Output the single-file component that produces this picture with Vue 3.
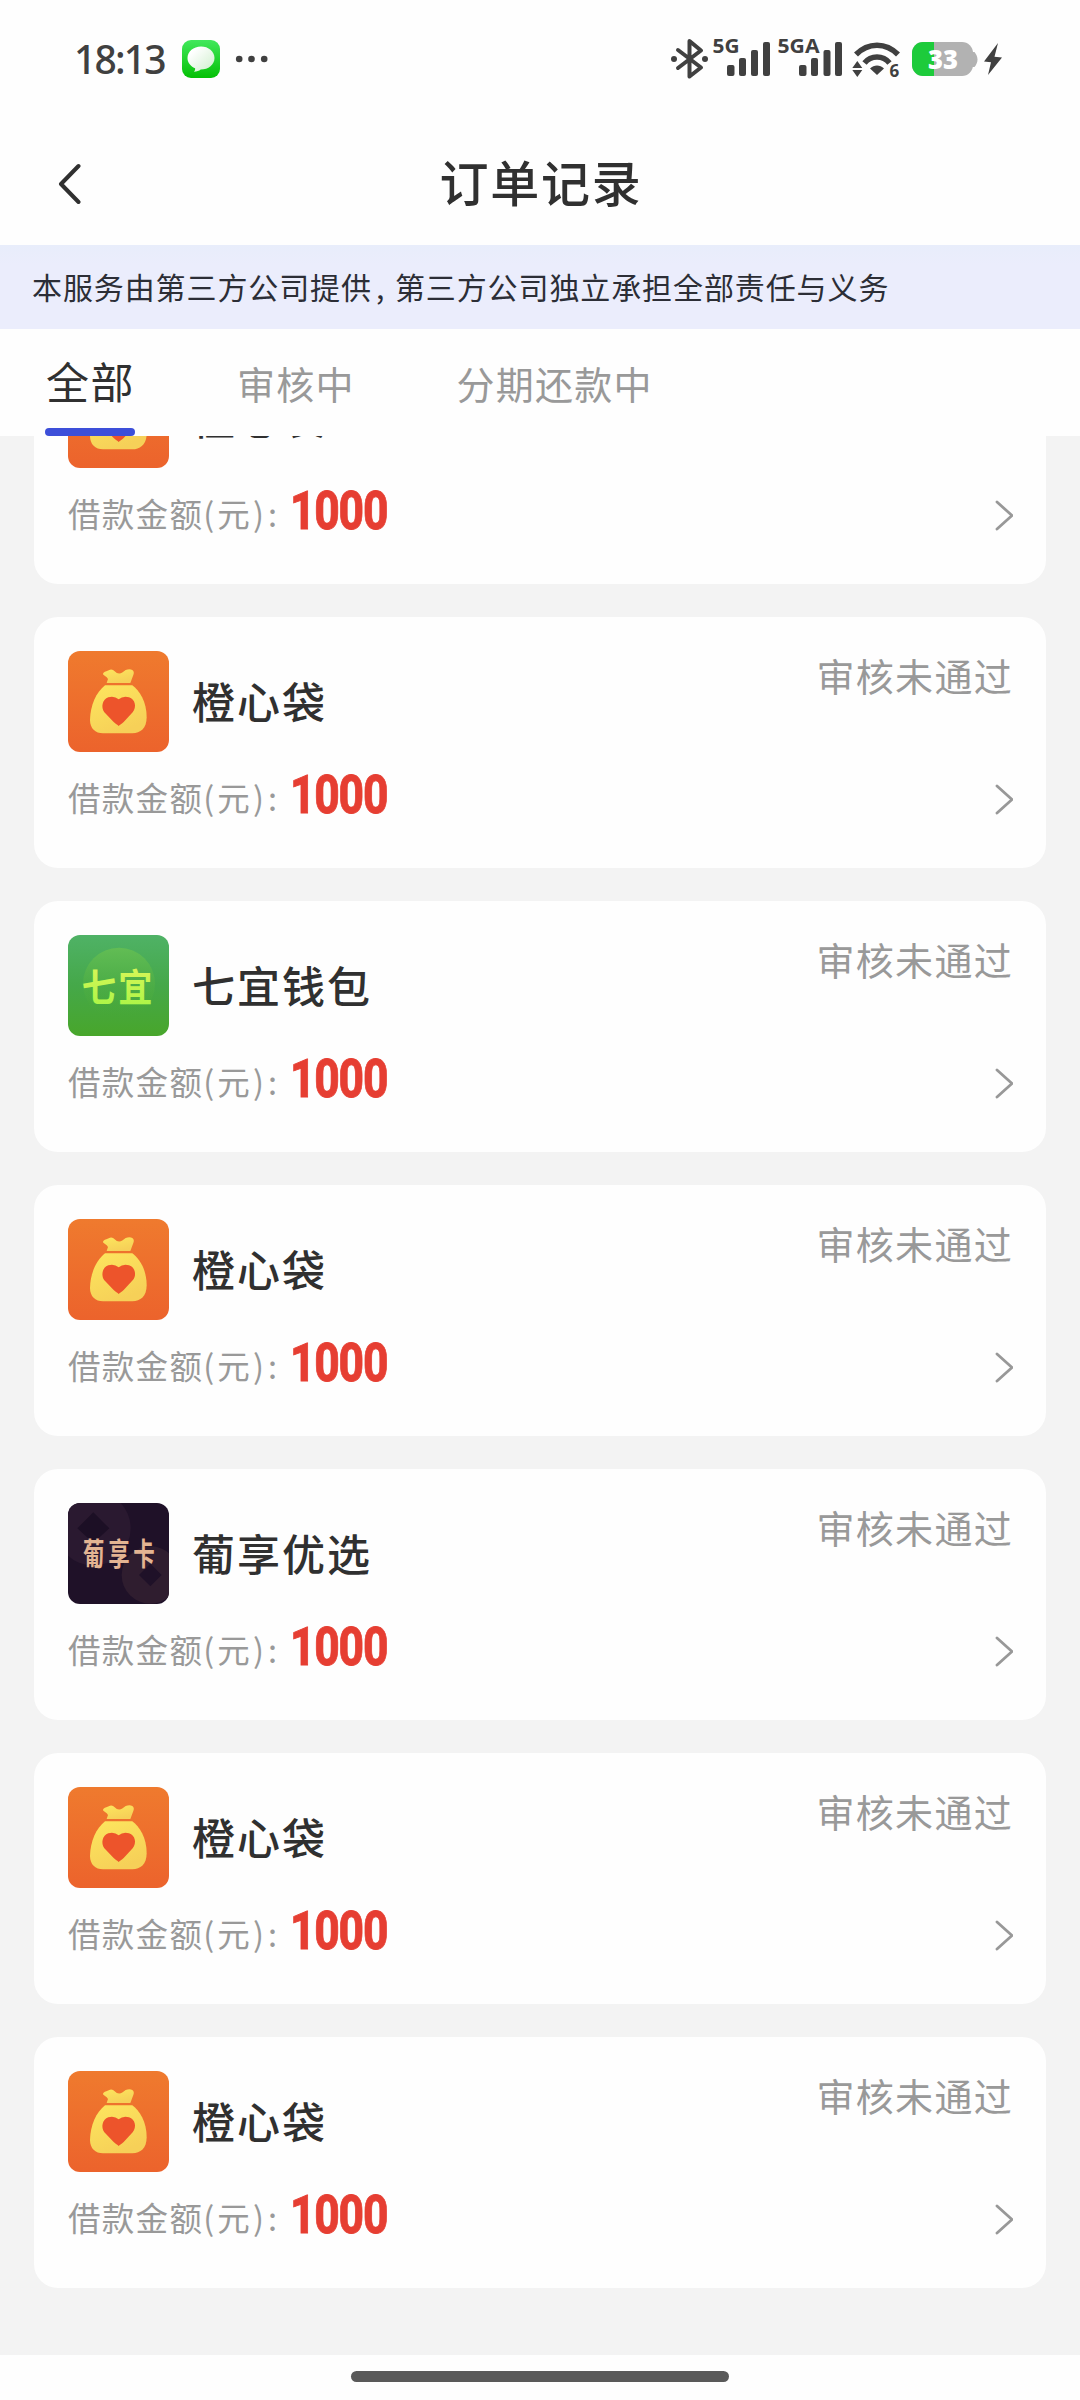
<script setup>
import { ref } from 'vue'

const tabs = ['全部', '审核中', '分期还款中']
const active = ref(0)

const orders = [
  { name: '橙心袋', logo: 'bag' },
  { name: '橙心袋', logo: 'bag' },
  { name: '七宜钱包', logo: 'qiyi' },
  { name: '橙心袋', logo: 'bag' },
  { name: '葡享优选', logo: 'puxiang' },
  { name: '橙心袋', logo: 'bag' },
  { name: '橙心袋', logo: 'bag' },
].map((o, id) => ({ id, amount: 1000, status: '审核未通过', ...o }))
</script>

<template>
  <div class="screen">
    <div class="statusbar">
      <span class="clock">18:13</span>
      <svg class="msg" width="38" height="38" viewBox="0 0 38 38">
        <defs>
          <linearGradient id="msgBg" x1="0" y1="0" x2="0" y2="1">
            <stop offset="0" stop-color="#42e85c" />
            <stop offset="1" stop-color="#04c005" />
          </linearGradient>
          <linearGradient id="msgBubble" x1="0" y1="0" x2="1" y2="1">
            <stop offset="0.2" stop-color="#fff" />
            <stop offset="1" stop-color="#cdeecb" />
          </linearGradient>
        </defs>
        <rect width="38" height="38" rx="9" fill="url(#msgBg)" />
        <path d="M19 6.500C11.500 6.500 5.500 11.500 5.500 18c0 4.500 3 8.300 7.600 10.200.2 1.300-.1 2.400-1.200 3.600 3 0 5.200-.9 6.800-2.200 7.800 0 13.800-5 13.800-11.600S26.500 6.500 19 6.500z" fill="url(#msgBubble)" />
      </svg>
      <svg class="dots" width="34" height="8" viewBox="0 0 34 8" fill="#404040">
        <circle cx="4.200" cy="4" r="3.300" /><circle cx="16.500" cy="4" r="3.300" /><circle cx="29.200" cy="4" r="3.300" />
      </svg>
      <div class="indicators">
        <svg width="43" height="48" viewBox="668 34 43 48" fill="none" stroke="#404040" stroke-width="4" stroke-linejoin="round" stroke-linecap="round">
          <path d="M678 50l23 17.500-11.500 9V41L701 50.500 678 68" />
          <g fill="#404040" stroke="none"><circle cx="674" cy="59" r="3" /><circle cx="705" cy="59" r="3" /></g>
        </svg>
        <svg width="65" height="48" viewBox="711 34 65 48" fill="#404040">
          <text class="net" x="712.500" y="53" textLength="27" lengthAdjust="spacingAndGlyphs">5G</text>
          <rect x="727" y="65" width="7.500" height="11" rx="2" /><rect x="739" y="58" width="7" height="18" rx="2" />
          <rect x="751" y="50" width="7" height="26" rx="2" /><rect x="763" y="42" width="7" height="34" rx="2" />
        </svg>
        <svg width="72" height="48" viewBox="776 34 72 48" fill="#404040">
          <text class="net" x="777.500" y="53" textLength="42" lengthAdjust="spacingAndGlyphs">5GA</text>
          <rect x="799" y="65" width="7.500" height="11" rx="2" /><rect x="811" y="58" width="7" height="18" rx="2" />
          <rect x="823.500" y="50" width="7" height="26" rx="2" /><rect x="835" y="42" width="7" height="34" rx="2" />
        </svg>
        <svg width="62" height="48" viewBox="848 34 62 48" fill="#404040">
          <g fill="none" stroke="#404040" stroke-width="5.500">
            <path d="M856 54.500C868 42 886 42 898 54.500" />
            <path d="M864.500 63C871 55 883 55 889.500 63" />
          </g>
          <path d="M870 68.500c4-4 10-4 14 0l-7 6.500z" />
          <path d="M857.300 61l5 7h-10zM857.300 77l5-7h-10z" />
          <text class="six" x="889.500" y="76.500">6</text>
        </svg>
        <svg width="70" height="48" viewBox="910 34 70 48">
          <clipPath id="battery"><rect x="912" y="42" width="61" height="34" rx="11" /></clipPath>
          <path d="M972 52h2.500c2 2.500 3 5 3 7.500s-1 5-3 7.500H972z" fill="#b2b2b2" />
          <g clip-path="url(#battery)">
            <rect x="912" y="42" width="61" height="34" fill="#b2b2b2" />
            <rect x="912" y="42" width="22" height="34" fill="#1dcb3b" />
          </g>
          <text class="pct" x="928" y="69" textLength="30" lengthAdjust="spacingAndGlyphs">33</text>
        </svg>
        <svg width="24" height="48" viewBox="980 34 24 48" fill="#404040">
          <path d="M998 43l-14 18.500 7 .8-3 12.700 14-17.500-7.500-.8z" />
        </svg>
      </div>
    </div>

    <header class="navbar">
      <svg class="back" width="25" height="42" viewBox="0 0 25 42" fill="none" stroke="#303030" stroke-width="4" stroke-linecap="round" stroke-linejoin="round">
        <path d="M22.500 3L5 21l17.500 18" />
      </svg>
      <h1>订单记录</h1>
    </header>

    <p class="notice">本服务由第三方公司提供<span class="comma">,</span>第三方公司独立承担全部责任与义务</p>

    <nav class="tabs">
      <button v-for="(t, i) in tabs" :key="t" class="tab" :class="{ on: i === active }" @click="active = i">{{ t }}</button>
    </nav>

    <main class="list">
      <article v-for="o in orders" :key="o.id" class="card">
        <div class="top">
          <svg class="logo" viewBox="0 0 303 303">
            <template v-if="o.logo === 'bag'">
              <defs>
                <linearGradient id="orange" x1="0" y1="0" x2="0" y2="1">
                  <stop offset="0" stop-color="#ef7a2e" /><stop offset="1" stop-color="#ec632c" />
                </linearGradient>
                <linearGradient id="gold" x1="0" y1="0" x2="0.500" y2="1">
                  <stop offset="0" stop-color="#fde65e" /><stop offset="1" stop-color="#f6d058" />
                </linearGradient>
              </defs>
              <rect width="303" height="303" fill="url(#orange)" />
              <path d="M116 96L120 84C116 76 108 75 105 70Q105 64 115 61L126 56Q134 54 140 61Q151 73 164 64L173 57Q185 52 193 57Q200 62 196 72L187 96z" fill="url(#gold)" />
              <path d="M111 103H193C214 119 236 151 236 199C236 232 217 247 193 247H105C82 247 66 232 66 207C67 162 85 124 111 103z" fill="url(#gold)" />
              <path d="M152 225C148 221 143 219 137 213L109 184C98 169 103 145 121 139Q139 134 152 145Q165 134 183 139C202 145 207 169 194 184L167 213C161 219 156 221 152 225z" fill="#ed542b" />
            </template>
            <template v-else-if="o.logo === 'qiyi'">
              <defs>
                <linearGradient id="green" x1="0" y1="0" x2="0" y2="1">
                  <stop offset="0" stop-color="#4fb266" /><stop offset="0.5" stop-color="#45a849" /><stop offset="1" stop-color="#48a62b" />
                </linearGradient>
                <linearGradient id="disc" x1="0" y1="0" x2="0" y2="1">
                  <stop offset="0" stop-color="#62bd54" /><stop offset="1" stop-color="#48a834" stop-opacity="0" />
                </linearGradient>
                <linearGradient id="lime" x1="0" y1="0" x2="0" y2="1">
                  <stop offset="0" stop-color="#e4f65c" /><stop offset="1" stop-color="#a6f545" />
                </linearGradient>
              </defs>
              <rect width="303" height="303" fill="url(#green)" />
              <circle cx="153" cy="146" r="108" fill="url(#disc)" />
              <text class="brand lime" transform="translate(41 198) scale(.9 1)" font-size="114" fill="url(#lime)">七宜</text>
            </template>
            <template v-else>
              <rect width="303" height="303" fill="#1f1128" />
              <circle cx="76" cy="76" r="112" fill="#2a1930" />
              <path d="M76 28l48 48-48 44-48-44z" fill="#1c0f25" />
              <circle cx="247" cy="216" r="86" fill="#2f1d2f" />
              <path d="M247 182l34 34-34 34-34-34z" fill="#1f1128" />
              <text class="brand gold" transform="translate(45 187) scale(.7 1)" font-size="92" fill="#e3b492">葡享卡</text>
            </template>
          </svg>
          <h2>{{ o.name }}</h2>
          <span class="state">{{ o.status }}</span>
        </div>
        <div class="bottom">
          <span class="label">借款金额<span class="paren">(</span>元<span class="paren close">)</span><span class="colon">:</span></span>
          <strong class="amount">{{ o.amount }}</strong>
          <svg class="go" width="22" height="32" viewBox="0 0 22 32" fill="none" stroke="#989898" stroke-width="2.800" stroke-linecap="round" stroke-linejoin="round">
            <path d="M6 3l15 13.500L6 30" />
          </svg>
        </div>
      </article>
    </main>

    <footer class="home"><span class="pill"></span></footer>
  </div>
</template>

<style>
body { background: #fff; }
</style>

<style scoped>
.screen {
  width: 1080px;
  height: 2400px;
  display: flex;
  flex-direction: column;
  overflow: hidden;
  background: #fefefe;
  color: #303030;
  font-family: "Noto Sans CJK SC", sans-serif;
}
.statusbar {
  height: 118px;
  box-sizing: border-box;
  padding: 0 76px 0 74px;
  display: flex;
  align-items: center;
  flex: none;
}
.clock {
  width: 108px;
  font: 500 39px/50px "Noto Sans", sans-serif;
  letter-spacing: -1.800px;
  color: #404040;
}
.msg { margin-right: 15px; }
.indicators { display: flex; margin-left: auto; margin-top: -2px; }
.indicators svg { overflow: visible; }
.net { font: 700 20px "Open Sans", sans-serif; }
.six { font: 700 17px "Open Sans", sans-serif; }
.pct { font: 800 27px "Open Sans", sans-serif; fill: #fff; }
.navbar {
  height: 127px;
  flex: none;
  display: flex;
  align-items: center;
  padding-left: 56px;
}
.back { flex: none; margin-bottom: -5px; }
.navbar h1 {
  flex: 1;
  margin: 0 79px 1px 0;
  text-align: center;
  font-size: 49px;
  line-height: 60px;
  font-weight: 500;
  letter-spacing: 1.800px;
}
.notice {
  margin: 0;
  height: 84px;
  flex: none;
  padding-left: 32px;
  line-height: 82px;
  font-size: 30px;
  letter-spacing: .9px;
  color: #2c2e36;
  background: linear-gradient(#e8edfb, #ebedfc 20px);
  white-space: nowrap;
}
.comma { display: inline-block; width: 23px; text-indent: 4px; letter-spacing: 0; }
.tabs {
  height: 107px;
  flex: none;
  display: flex;
  padding-left: 45px;
}
.tab {
  position: relative;
  border: 0;
  padding: 0 0 5px;
  margin-right: 102px;
  background: none;
  font: 400 38px/108px "Noto Sans CJK SC", sans-serif;
  letter-spacing: 1.200px;
  color: #999;
  white-space: nowrap;
}
.tab.on { width: 90px; padding-left: 1px; font-size: 43px; line-height: 103px; letter-spacing: 1.500px; color: #303030; }
.tab.on::after {
  content: "";
  position: absolute;
  left: 0;
  bottom: 0;
  width: 90px;
  height: 8px;
  border-radius: 4px;
  background: #3d4fd9;
}
.list {
  flex: 1;
  min-height: 0;
  overflow: hidden;
  display: flex;
  flex-direction: column;
  gap: 33px;
  padding: 0 34px;
  background: #f3f3f3;
}
.card {
  height: 251px;
  flex: none;
  box-sizing: border-box;
  padding: 34px 33px 0 34px;
  border-radius: 24px;
  background: #fefefe;
}
.card:first-child { margin-top: -103px; }
.top { height: 101px; display: flex; align-items: center; }
.logo { width: 101px; height: 101px; border-radius: 12px; flex: none; }
.brand { font-family: "Noto Sans CJK SC", sans-serif; font-weight: 700; }
.brand.lime { letter-spacing: 8px; }
.brand.gold { letter-spacing: 16px; }
.top h2 {
  margin: -3px 0 0 23px;
  font-size: 43px;
  line-height: 60px;
  font-weight: 500;
  letter-spacing: 2px;
}
.state {
  margin-left: auto;
  align-self: flex-start;
  margin-top: -4px;
  font-size: 38px;
  line-height: 56px;
  letter-spacing: 1.300px;
  color: #999;
}
.bottom { height: 92px; display: flex; align-items: center; }
.label { width: 222px; margin-top: -2px; font-size: 32.500px; line-height: 40px; letter-spacing: 1.300px; color: #999; white-space: nowrap; }
.paren { display: inline-block; width: 14px; letter-spacing: 0; }
.paren.close { margin-left: 2px; width: 15px; }
.colon { display: inline-block; letter-spacing: 0; }
.amount {
  font: 800 54px/60px Roboto, sans-serif;
  letter-spacing: -1.500px;
  color: #e63e32;
  -webkit-text-stroke: .8px #e63e32;
  transform: scaleX(.82);
  transform-origin: left;
  margin-top: -6px;
}
.go { margin-left: auto; margin-top: 1px; }
.home {
  height: 45px;
  flex: none;
  display: flex;
  justify-content: center;
  align-items: center;
}
.pill { width: 378px; height: 11px; margin-top: -2px; border-radius: 6px; background: #595959; }
</style>
